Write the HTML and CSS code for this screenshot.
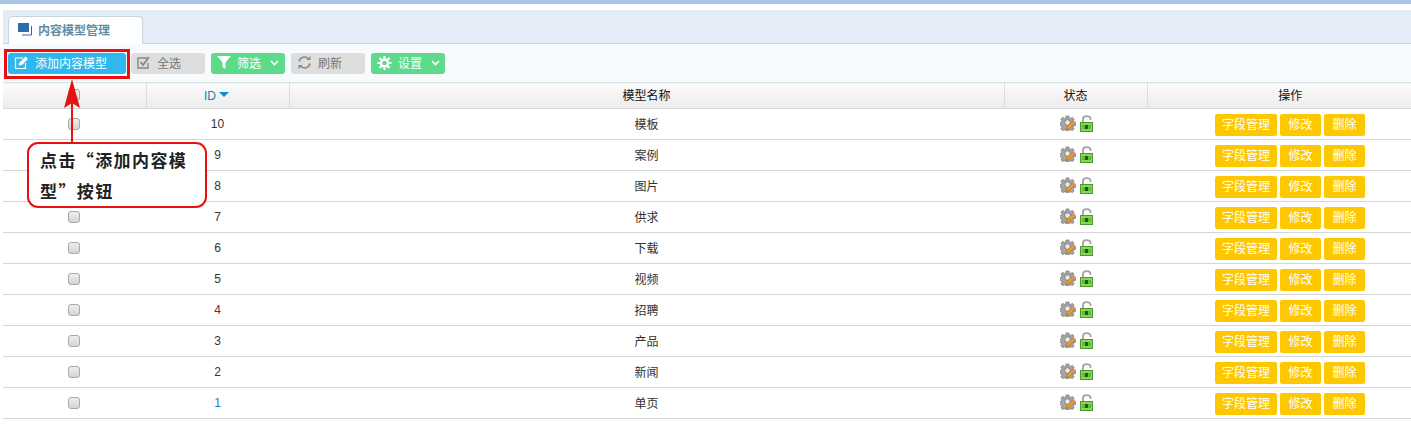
FILE: index.html
```html
<!DOCTYPE html>
<html lang="zh-CN">
<head>
    <meta charset="UTF-8">
    <title>内容模型管理</title>
    <link rel="stylesheet" href="styles.css">
</head>
<body>
    <svg class="defs" width="0" height="0">
        <symbol id="ico-gear" viewBox="0 0 17 17">
            <path d="M6.500 1h3l.4 2 1.500.6 1.700-1.100 2 2-1.100 1.700.6 1.500 2 .4v3l-2 .4-.6 1.500 1.100 1.700-2 2-1.700-1.100-1.500.6-.4 2h-3l-.4-2-1.500-.6-1.700 1.100-2-2 1.100-1.700-.6-1.500-2-.4v-3l2-.4.6-1.500-1.100-1.700 2-2 1.700 1.100 1.500-.6z" fill="#a4a4a4" stroke="#777777" stroke-width=".7"/>
            <circle cx="8" cy="8" r="3" fill="#e9e9e9" stroke="#777777" stroke-width=".9"/>
            <path d="M6.500 15.500l.8-3 6-6 2.200 2.200-6 6z" fill="#f2a01e" stroke="#a85f10" stroke-width=".6"/>
            <path d="M13.300 6.500l1.200-1.200 2.200 2.200-1.200 1.200z" fill="#e58ac8"/>
        </symbol>
        <symbol id="ico-lock" viewBox="0 0 13 17">
            <path d="M3 7V4C3 2.200 4.500 1.200 6.500 1.200S10.500 2.200 10.500 4v1" fill="none" stroke="#a3a3a3" stroke-width="1.800"/>
            <rect x=".5" y="7.500" width="12" height="9" fill="#8ad653" stroke="#4a9a30"/>
            <rect x="2" y="10" width="9" height="4" fill="#5fbd3a"/>
            <rect x="5" y="10" width="3" height="4" fill="#1d5a17"/>
        </symbol>
    </svg>

    <div class="top-line"></div>

    <div class="tab-bar">
        <div class="tab">
            <svg class="tab-ico" width="15" height="13" viewBox="0 0 15 13">
                <rect x="0" y="0" width="11" height="9" fill="#2c6cb0"/>
                <path d="M13.500 3v9H4" fill="none" stroke="#2c6cb0"/>
            </svg>
            <span>内容模型管理</span>
        </div>
    </div>

    <div class="toolbar">
        <a class="btn btn-blue btn-add">
            <svg width="15" height="14" viewBox="0 0 15 14"><path d="M9 2H1.500v10.500h10V7" fill="none" stroke="#fff" stroke-width="1.200"/><path d="M4.500 9.500l1-3L11.500.500l2.500 2.500-6 6z" fill="#fff"/></svg>
            <span>添加内容模型</span>
        </a>
        <a class="btn btn-gray">
            <svg width="14" height="13" viewBox="0 0 14 13"><path d="M10 2H1v10h10V7" fill="none" stroke="#888" stroke-width="1.400"/><path d="M3.500 6l2.500 3 6-8" fill="none" stroke="#888" stroke-width="1.800"/></svg>
            <span>全选</span>
        </a>
        <a class="btn btn-green">
            <svg width="14" height="13" viewBox="0 0 14 13"><path d="M0 0h14L8.500 6.500V13l-3-2V6.500z" fill="#fff"/></svg>
            <span>筛选</span>
            <svg class="caret" width="9" height="6" viewBox="0 0 9 6"><path d="M1 1l3.500 3.500L8 1" fill="none" stroke="#fff" stroke-width="1.600"/></svg>
        </a>
        <a class="btn btn-gray">
            <svg width="15" height="13" viewBox="0 0 14 13"><path d="M1.500 5.500A5.500 5.500 0 0 1 11 3M12.500 7.500A5.500 5.500 0 0 1 3 10" fill="none" stroke="#888" stroke-width="1.500"/><path d="M9 4h4V0zM5 9H1v4z" fill="#888"/></svg>
            <span>刷新</span>
        </a>
        <a class="btn btn-green">
            <svg width="15" height="14" viewBox="0 0 14 14"><circle cx="7" cy="7" r="3.500" fill="none" stroke="#fff" stroke-width="2.400"/><path d="M7 0v14M0 7h14M2 2l10 10M12 2L2 12" stroke="#fff" stroke-width="2.200" stroke-dasharray="2.500 9"/></svg>
            <span>设置</span>
            <svg class="caret" width="9" height="6" viewBox="0 0 9 6"><path d="M1 1l3.500 3.500L8 1" fill="none" stroke="#fff" stroke-width="1.600"/></svg>
        </a>
    </div>

    <table class="list">
        <thead>
            <tr>
                <th class="col-check"><span class="check"></span></th>
                <th class="col-id"><span class="sort">ID</span><i class="sort-down"></i></th>
                <th>模型名称</th>
                <th class="col-status">状态</th>
                <th class="col-action">操作</th>
            </tr>
        </thead>
        <tbody>
            <tr>
                <td><span class="check"></span></td><td class="num">10</td><td class="name">模板</td>
                <td class="status"><svg class="gear"><use href="#ico-gear"/></svg><svg class="lock"><use href="#ico-lock"/></svg></td>
                <td class="action"><a class="act">字段管理</a><a class="act">修改</a><a class="act">删除</a></td>
            </tr>
            <tr>
                <td><span class="check"></span></td><td class="num">9</td><td class="name">案例</td>
                <td class="status"><svg class="gear"><use href="#ico-gear"/></svg><svg class="lock"><use href="#ico-lock"/></svg></td>
                <td class="action"><a class="act">字段管理</a><a class="act">修改</a><a class="act">删除</a></td>
            </tr>
            <tr>
                <td><span class="check"></span></td><td class="num">8</td><td class="name">图片</td>
                <td class="status"><svg class="gear"><use href="#ico-gear"/></svg><svg class="lock"><use href="#ico-lock"/></svg></td>
                <td class="action"><a class="act">字段管理</a><a class="act">修改</a><a class="act">删除</a></td>
            </tr>
            <tr>
                <td><span class="check"></span></td><td class="num">7</td><td class="name">供求</td>
                <td class="status"><svg class="gear"><use href="#ico-gear"/></svg><svg class="lock"><use href="#ico-lock"/></svg></td>
                <td class="action"><a class="act">字段管理</a><a class="act">修改</a><a class="act">删除</a></td>
            </tr>
            <tr>
                <td><span class="check"></span></td><td class="num">6</td><td class="name">下载</td>
                <td class="status"><svg class="gear"><use href="#ico-gear"/></svg><svg class="lock"><use href="#ico-lock"/></svg></td>
                <td class="action"><a class="act">字段管理</a><a class="act">修改</a><a class="act">删除</a></td>
            </tr>
            <tr>
                <td><span class="check"></span></td><td class="num">5</td><td class="name">视频</td>
                <td class="status"><svg class="gear"><use href="#ico-gear"/></svg><svg class="lock"><use href="#ico-lock"/></svg></td>
                <td class="action"><a class="act">字段管理</a><a class="act">修改</a><a class="act">删除</a></td>
            </tr>
            <tr>
                <td><span class="check"></span></td><td class="num num-red">4</td><td class="name">招聘</td>
                <td class="status"><svg class="gear"><use href="#ico-gear"/></svg><svg class="lock"><use href="#ico-lock"/></svg></td>
                <td class="action"><a class="act">字段管理</a><a class="act">修改</a><a class="act">删除</a></td>
            </tr>
            <tr>
                <td><span class="check"></span></td><td class="num">3</td><td class="name">产品</td>
                <td class="status"><svg class="gear"><use href="#ico-gear"/></svg><svg class="lock"><use href="#ico-lock"/></svg></td>
                <td class="action"><a class="act">字段管理</a><a class="act">修改</a><a class="act">删除</a></td>
            </tr>
            <tr>
                <td><span class="check"></span></td><td class="num">2</td><td class="name">新闻</td>
                <td class="status"><svg class="gear"><use href="#ico-gear"/></svg><svg class="lock"><use href="#ico-lock"/></svg></td>
                <td class="action"><a class="act">字段管理</a><a class="act">修改</a><a class="act">删除</a></td>
            </tr>
            <tr>
                <td><span class="check"></span></td><td class="num num-blue">1</td><td class="name">单页</td>
                <td class="status"><svg class="gear"><use href="#ico-gear"/></svg><svg class="lock"><use href="#ico-lock"/></svg></td>
                <td class="action"><a class="act">字段管理</a><a class="act">修改</a><a class="act">删除</a></td>
            </tr>
        </tbody>
    </table>

    <!-- 标注：红框、箭头、说明 -->
    <div class="mark-box"></div>
    <svg class="mark-arrow" width="20" height="66" viewBox="0 0 20 66">
        <path d="M10 0l8 29-8-5-8 5z" fill="#e81010"/>
        <path d="M10 20v46" stroke="#e81010" stroke-width="2"/>
    </svg>
    <div class="mark-note">点击“添加内容模型”按钮</div>
</body>
</html>
```

FILE: styles.css
```css
body {
    margin: 0;
    background-color: #ffffff;
    font-family: "Liberation Sans", "Noto Sans CJK SC", sans-serif;
    font-size: 12px;
    color: #333333;
}

.defs {
    display: block;
    height: 0;
}

.top-line {
    height: 4px;
    background-color: #a8c4e2;
}

.tab-bar {
    height: 34px;
    margin: 6px 0 0 3px;
    padding: 6px 0 0 5px;
    box-sizing: border-box;
    background-color: #e3ecf7;
    border-bottom: 1px solid #c9d3dc;
}

.tab {
    display: flex;
    align-items: center;
    gap: 5px;
    width: 135px;
    height: 29px;
    padding: 0 0 3px 9px;
    box-sizing: border-box;
    background-color: #ffffff;
    border: 1px solid #c9d3dc;
    border-bottom: none;
    border-radius: 5px 5px 0 0;
    color: #5e8ea5;
    font-weight: bold;
}

.toolbar {
    display: flex;
    align-items: center;
    gap: 6px;
    height: 38px;
    margin-left: 3px;
    padding: 1px 0 0 5px;
    box-sizing: border-box;
    background-color: #f8fbfe;
}

.btn {
    display: flex;
    align-items: center;
    gap: 6px;
    width: 74px;
    height: 21px;
    padding: 0 0 2px 6px;
    box-sizing: border-box;
    border-radius: 3px;
    color: #ffffff;
}

.btn-add {
    width: 118px;
    margin-right: -1px;
}

.btn-blue {
    background-color: #2fb8ee;
}

.btn-gray {
    background-color: #dedede;
    color: #777777;
}

.btn-green {
    background-color: #5edb8a;
}

.caret {
    margin-left: 3px;
}

.list {
    width: 1408px;
    margin-left: 3px;
    border-collapse: collapse;
    table-layout: fixed;
}

.list thead tr {
    height: 26px;
}

.list tbody tr {
    height: 31px;
}

.list th {
    box-sizing: border-box;
    padding: 0 0 2px;
    font-weight: normal;
    color: #111111;
    background: linear-gradient(#fbfbfb, #ececec);
    border-top: 1px solid #d7e3e8;
    border-bottom: 1px solid #d6d6d6;
    border-right: 1px solid #dddddd;
}

.list th:last-child {
    border-right: none;
}

.list td {
    padding: 0;
    text-align: center;
    border-bottom: 1px solid #d6d6d6;
}

.col-check {
    width: 143px;
}

.col-id {
    width: 143px;
}

.col-status {
    width: 143px;
}

.col-action {
    width: 264px;
}

.list .col-action {
    padding-left: 22px;
}

.list .action {
    padding: 2px 0 0 22px;
}

.list .col-id {
    padding: 0 2px 0 0;
}

.list .col-check {
    padding: 0;
}

.list .name {
    padding: 0 0 2px;
}

.list .status {
    padding: 0 0 2px 2px;
}

.check {
    display: block;
    width: 10px;
    height: 10px;
    margin: -1px 0 0 65px;
    border: 1px solid #a9a9a9;
    border-radius: 3px;
    background: linear-gradient(#eeeeee, #d4d4d4);
}

.sort {
    color: #2b7ab0;
}

.sort-down {
    display: inline-block;
    margin: 0 0 3px 3px;
    border-left: 5px solid transparent;
    border-right: 5px solid transparent;
    border-top: 5px solid #0b8fd6;
}

.num-red {
    color: #7a2a2a;
}

.num-blue {
    color: #1f7ac0;
}

.status svg {
    vertical-align: middle;
}

.gear {
    width: 16px;
    height: 16px;
    margin-right: 4px;
}

.lock {
    width: 13px;
    height: 17px;
}

.action .act {
    display: inline-block;
    box-sizing: border-box;
    min-width: 41px;
    height: 22px;
    line-height: 22px;
    padding: 0 7px;
    margin-right: 3px;
    border-radius: 2px;
    background-color: #fdc800;
    color: #ffffff;
    text-align: center;
}

.action .act:last-child {
    margin-right: 0;
}

.mark-box {
    position: absolute;
    left: 4px;
    top: 49px;
    width: 120px;
    height: 24px;
    border: 3px solid #e81010;
}

.mark-arrow {
    position: absolute;
    left: 62px;
    top: 79px;
}

.mark-note {
    position: absolute;
    left: 27px;
    top: 142px;
    width: 180px;
    height: 66px;
    padding: 0 8px 0 11px;
    box-sizing: border-box;
    background-color: #ffffff;
    border: 2px solid #e81010;
    border-radius: 11px;
    font-size: 17px;
    line-height: 31px;
    letter-spacing: 1.400px;
    font-weight: bold;
    font-family: "Noto Sans CJK SC", sans-serif;
    color: #222222;
}
```
